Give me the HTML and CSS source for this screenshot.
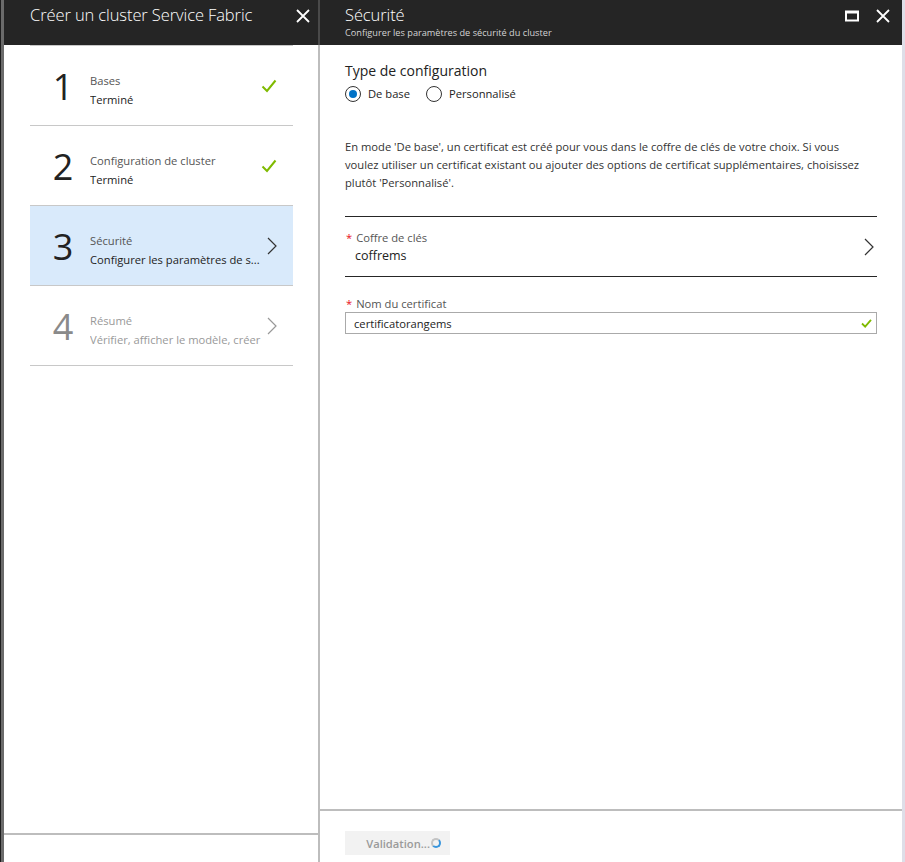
FILE: index.html
```html
<!DOCTYPE html>
<html lang="fr">
<head>
<meta charset="utf-8">
<title>Créer un cluster Service Fabric</title>
<link rel="stylesheet" href="styles.css">
</head>
<body>
<div class="edge"></div>
<section class="blade blade-left">
  <header class="head">
    <div class="head-titles">
      <h1 class="head-title">Créer un cluster Service Fabric</h1>
    </div>
    <div class="head-actions">
      <svg class="icon-close" viewBox="0 0 14 14" width="14" height="14"><path d="M1 1 L13 13 M13 1 L1 13" stroke="#fff" stroke-width="1.8" fill="none"/></svg>
    </div>
  </header>
  <div class="body-left">
    <ul class="steps">
      <li class="step">
        <div class="step-num">1</div>
        <div class="step-text"><div class="step-title">Bases</div><div class="step-sub">Terminé</div></div>
        <svg class="step-icon" viewBox="0 0 16 14" width="16" height="14"><path d="M1.5 7.5 L6 12 L14.5 1.5" stroke="#7fba00" stroke-width="2" fill="none"/></svg>
      </li>
      <li class="step">
        <div class="step-num">2</div>
        <div class="step-text"><div class="step-title">Configuration de cluster</div><div class="step-sub">Terminé</div></div>
        <svg class="step-icon" viewBox="0 0 16 14" width="16" height="14"><path d="M1.5 7.5 L6 12 L14.5 1.5" stroke="#7fba00" stroke-width="2" fill="none"/></svg>
      </li>
      <li class="step step-active">
        <div class="step-num">3</div>
        <div class="step-text"><div class="step-title">Sécurité</div><div class="step-sub">Configurer les paramètres de s...</div></div>
        <svg class="step-icon" viewBox="0 0 10 18" width="10" height="18"><path d="M1 1 L9 9 L1 17" stroke="#333" stroke-width="1.2" fill="none"/></svg>
      </li>
      <li class="step step-disabled">
        <div class="step-num">4</div>
        <div class="step-text"><div class="step-title">Résumé</div><div class="step-sub">Vérifier, afficher le modèle, créer</div></div>
        <svg class="step-icon" viewBox="0 0 10 18" width="10" height="18"><path d="M1 1 L9 9 L1 17" stroke="#999" stroke-width="1.2" fill="none"/></svg>
      </li>
    </ul>
  </div>
  <footer class="foot-left"></footer>
</section>
<section class="blade blade-right">
  <header class="head">
    <div class="head-titles">
      <h1 class="head-title">Sécurité</h1>
      <div class="head-sub">Configurer les paramètres de sécurité du cluster</div>
    </div>
    <div class="head-actions">
      <svg class="icon-max" viewBox="0 0 14 12" width="14" height="12"><rect x="1" y="1.5" width="12" height="9" stroke="#fff" stroke-width="2" fill="none"/><rect x="1" y="1" width="12" height="2.5" fill="#fff"/></svg>
      <svg class="icon-close" viewBox="0 0 14 14" width="14" height="14"><path d="M1 1 L13 13 M13 1 L1 13" stroke="#fff" stroke-width="1.8" fill="none"/></svg>
    </div>
  </header>
  <div class="body-right">
    <h2 class="section-title">Type de configuration</h2>
    <div class="radios">
      <label class="radio"><span class="radio-dot radio-on"></span>De base</label>
      <label class="radio"><span class="radio-dot"></span>Personnalisé</label>
    </div>
    <p class="desc">En mode 'De base', un certificat est créé pour vous dans le coffre de clés de votre choix. Si vous voulez utiliser un certificat existant ou ajouter des options de certificat supplémentaires, choisissez plutôt 'Personnalisé'.</p>
    <div class="picker">
      <div class="picker-text">
        <div class="field-label"><span class="req">*</span>Coffre de clés</div>
        <div class="picker-value">coffrems</div>
      </div>
      <svg class="picker-chev" viewBox="0 0 10 18" width="10" height="18"><path d="M1 1 L9 9 L1 17" stroke="#333" stroke-width="1.2" fill="none"/></svg>
    </div>
    <div class="field">
      <div class="field-label"><span class="req">*</span>Nom du certificat</div>
      <div class="input">
        <span class="input-value">certificatorangems</span>
        <svg class="input-ok" viewBox="0 0 12 10" width="11" height="9"><path d="M1 5 L4.5 8.5 L11 1" stroke="#7fba00" stroke-width="2" fill="none"/></svg>
      </div>
    </div>
  </div>
  <footer class="foot-right">
    <button class="btn-validate" type="button">Validation...<span class="spinner"></span></button>
  </footer>
</section>
<div class="edge-right"></div>
</body>
</html>
```
FILE: styles.css
```css
* { box-sizing: border-box; }
html, body { margin: 0; padding: 0; }
body {
  display: flex;
  width: 905px;
  height: 862px;
  overflow: hidden;
  font-family: "Open Sans", "Noto Sans", sans-serif;
  background: #fff;
  color: #222;
}
.edge {
  width: 4px;
  flex: none;
  background: #6b6b6b;
  border-left: 1px solid #1e1e1e;
}
.edge-right {
  width: 3px;
  flex: none;
  background: #dedee8;
}
.blade {
  display: flex;
  flex-direction: column;
  height: 862px;
}
.blade-left {
  width: 316px;
  flex: none;
}
.blade-right {
  flex: 1;
}
.head {
  height: 45px;
  flex: none;
  background: #252525;
  color: #fff;
  display: flex;
  justify-content: space-between;
  align-items: flex-start;
}
.blade-left .head {
  border-right: 2px solid #494949;
  padding: 0 8px 0 26px;
}
.blade-right .head {
  padding: 0 12px 0 25px;
}
.head-title {
  margin: 0;
  font-size: 16.5px;
  font-weight: 300;
  line-height: 22px;
  padding-top: 4px;
  letter-spacing: -0.1px;
}
.head-sub {
  font-size: 9.2px;
  line-height: 12px;
  color: #d4d4d4;
  margin-top: 1px;
}
.head-actions {
  display: flex;
  align-items: center;
  gap: 17px;
  padding-top: 9px;
}
.body-left {
  flex: 1;
  border-right: 2px solid #bdbdbd;
  padding: 0 25px 0 26px;
}
.steps {
  list-style: none;
  margin: 0;
  padding: 0;
}
.step {
  height: 80px;
  border-top: 1px solid #c8c8c8;
  display: flex;
  align-items: center;
  padding-right: 16px;
}
.step:last-child { border-bottom: 1px solid #c8c8c8; height: 81px; }
.step-num {
  width: 60px;
  padding-left: 6px;
  text-align: center;
  font-size: 36px;
  font-weight: 400;
  color: #222;
  line-height: 40px;
  margin-top: 3px;
  flex: none;
}
.step-text {
  flex: 1;
  font-size: 11.2px;
  line-height: 19px;
  margin-top: 8px;
  white-space: nowrap;
  overflow: hidden;
}
.step-title { color: #555; }
.step-sub { color: #222; }
.step-icon { flex: none; }
.step-active { background: #d9eafb; }
.step-disabled .step-num { color: #8a8a8a; }
.step-disabled .step-title,
.step-disabled .step-sub { color: #999; }
.foot-left {
  height: 29px;
  flex: none;
  border-top: 2px solid #bdbdbd;
  border-right: 2px solid #bdbdbd;
}
.body-right {
  flex: 1;
  padding: 16px 25px 0 25px;
}
.section-title {
  margin: 0;
  font-size: 14px;
  font-weight: 400;
  line-height: 20px;
  color: #222;
}
.radios {
  display: flex;
  gap: 16px;
  margin-top: 4px;
}
.radio {
  display: flex;
  align-items: center;
  gap: 7px;
  font-size: 11.2px;
  color: #222;
  line-height: 18px;
}
.radio-dot {
  width: 16px;
  height: 16px;
  border: 1px solid #333;
  border-radius: 50%;
  display: inline-flex;
  align-items: center;
  justify-content: center;
}
.radio-on::after {
  content: "";
  width: 8px;
  height: 8px;
  border-radius: 50%;
  background: #0072c6;
}
.desc {
  margin: 35px 0 0 0;
  font-size: 11.2px;
  line-height: 18px;
  color: #333;
  width: 530px;
}
.picker {
  margin-top: 24px;
  height: 61px;
  border-top: 1px solid #262626;
  border-bottom: 1px solid #262626;
  display: flex;
  align-items: center;
  justify-content: space-between;
  padding-right: 3px;
}
.picker-text { padding-top: 2px; }
.field-label {
  font-size: 11.2px;
  color: #555;
  line-height: 16px;
}
.req {
  color: #e81123;
  margin-right: 4px;
  margin-left: 1px;
}
.picker-value {
  font-size: 12.5px;
  color: #222;
  line-height: 20px;
  padding-left: 10px;
}
.field { margin-top: 19px; }
.input {
  margin-top: 0;
  height: 22px;
  border: 1px solid #aaa;
  display: flex;
  align-items: center;
  justify-content: space-between;
  padding: 0 4px 0 8px;
  font-size: 11.2px;
  color: #222;
}
.foot-right {
  height: 53px;
  flex: none;
  border-top: 2px solid #bdbdbd;
  padding: 20px 0 0 25px;
}
.btn-validate {
  height: 24px;
  width: 105px;
  border: none;
  background: #f2f2f2;
  color: #9a9a9a;
  font-family: inherit;
  font-size: 11.2px;
  font-weight: 600;
  display: flex;
  align-items: center;
  justify-content: flex-end;
  padding: 0 9px 0 0;
  gap: 1px;
}
.spinner {
  width: 10px;
  height: 10px;
  border-radius: 50%;
  border: 2px solid #c4c4c4;
  border-right-color: #3a96dd;
  border-bottom-color: #3a96dd;
  display: inline-block;
}
```
